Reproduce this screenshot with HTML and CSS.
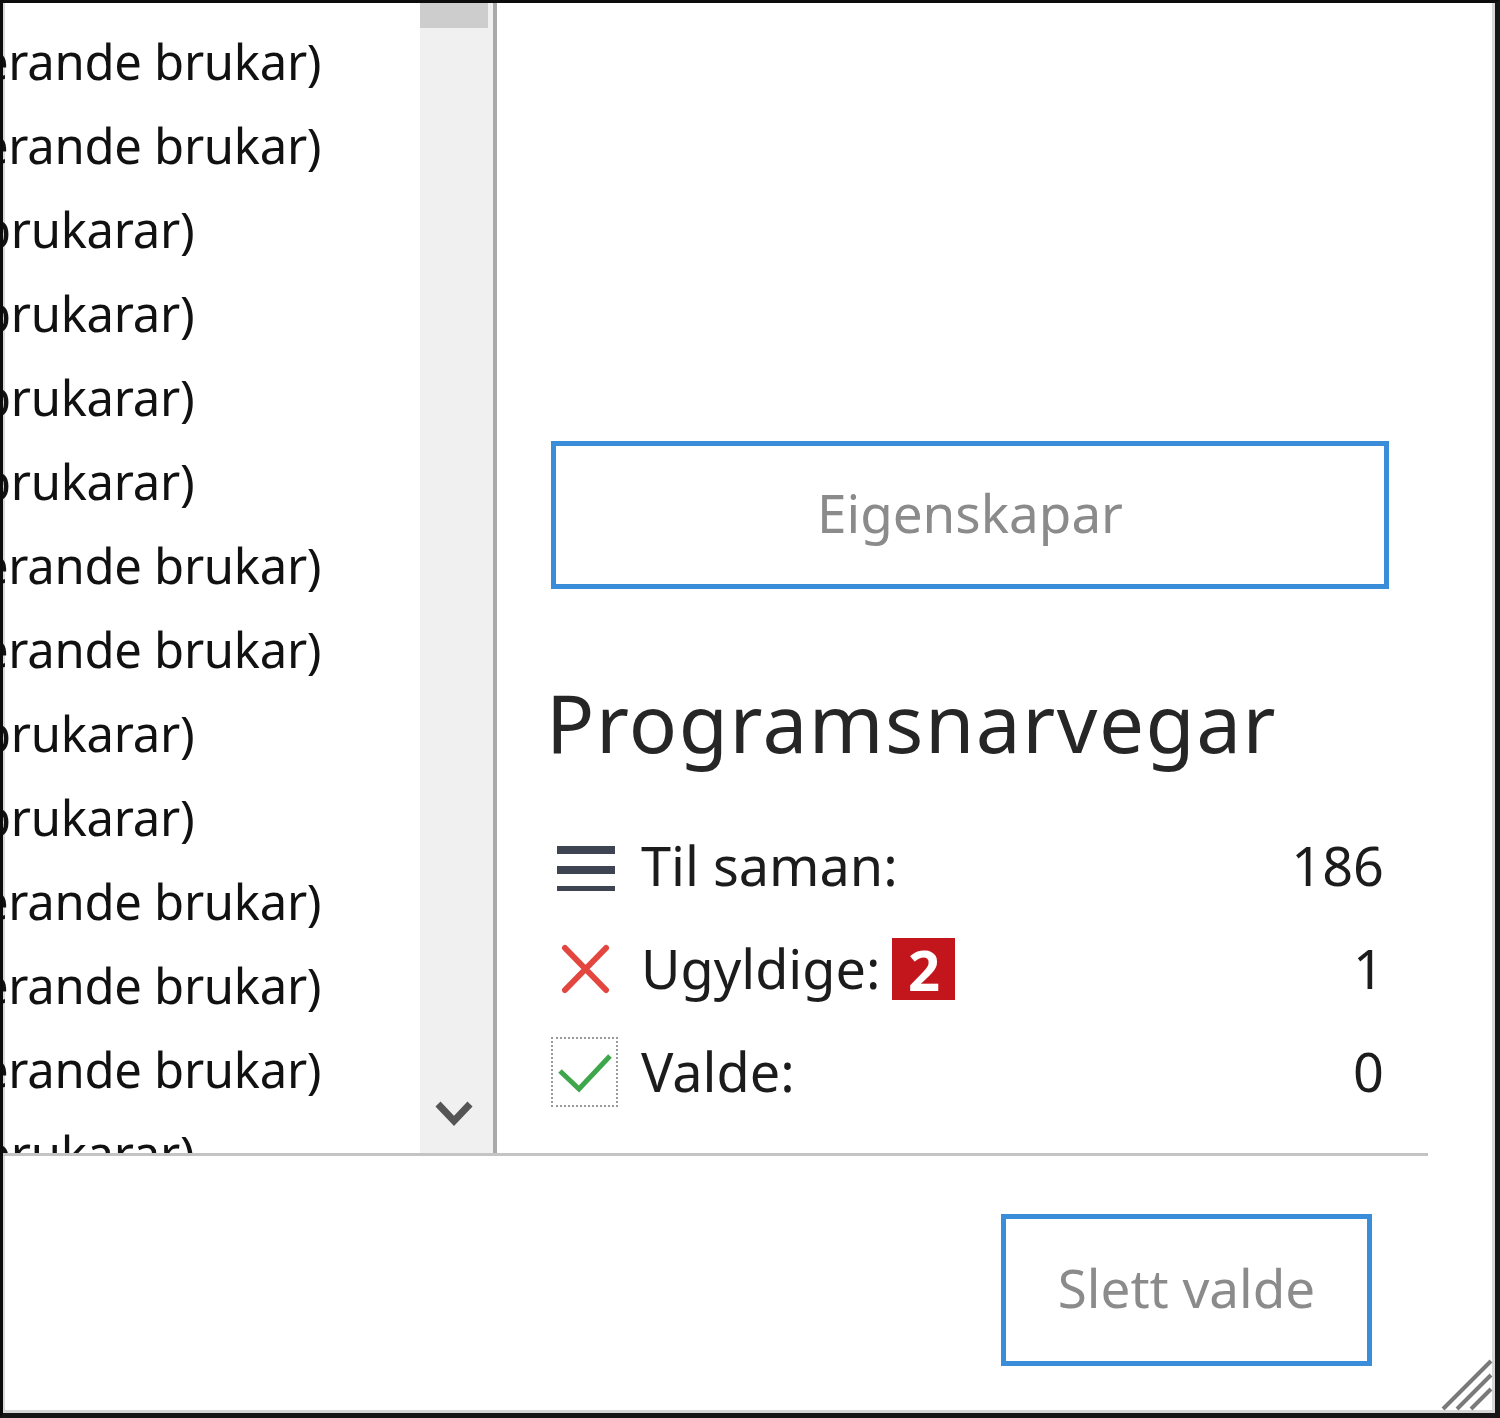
FILE: index.html
```html
<!DOCTYPE html>
<html lang="nn">
<head>
<meta charset="utf-8">
<title>Programsnarvegar</title>
<link rel="stylesheet" href="styles.css">
</head>
<body>
<div class="window">
  <div class="main">
    <div class="list">
      <div class="row">erande brukar)</div>
      <div class="row">erande brukar)</div>
      <div class="row">brukarar)</div>
      <div class="row">brukarar)</div>
      <div class="row">brukarar)</div>
      <div class="row">brukarar)</div>
      <div class="row">erande brukar)</div>
      <div class="row">erande brukar)</div>
      <div class="row">brukarar)</div>
      <div class="row">brukarar)</div>
      <div class="row">erande brukar)</div>
      <div class="row">erande brukar)</div>
      <div class="row">erande brukar)</div>
      <div class="row">brukarar)</div>
    </div>
    <div class="scrollbar">
      <div class="thumb"></div>
      <div class="arrow">
        <svg width="40" height="30" viewBox="0 0 40 30"><path d="M4 6 L20 23 L36 6" fill="none" stroke="#555" stroke-width="7"/></svg>
      </div>
    </div>
    <div class="panel">
      <div class="btn btn-props">Eigenskapar</div>
      <h2 class="heading">Programsnarvegar</h2>
      <div class="stats">
        <div class="stat">
          <span class="icon">
            <svg width="60" height="50" viewBox="0 0 60 50"><rect x="2" y="5" width="58" height="8" fill="#3e4452"/><rect x="2" y="25" width="58" height="8" fill="#3e4452"/><rect x="2" y="45" width="58" height="8" fill="#3e4452"/></svg>
          </span>
          <span class="label">Til saman:</span>
          <span class="value">186</span>
        </div>
        <div class="stat">
          <span class="icon">
            <svg width="50" height="50" viewBox="0 0 50 50"><path d="M5 4 L46 46 M46 4 L5 46" stroke="#e3463e" stroke-width="6" stroke-linecap="round"/></svg>
          </span>
          <span class="label">Ugyldige:</span>
          <span class="badge">2</span>
          <span class="value">1</span>
        </div>
        <div class="stat">
          <span class="icon icon-check">
            <svg width="62" height="66" viewBox="0 0 62 66"><path d="M6 32 L25 50 L56 17" fill="none" stroke="#3ea64b" stroke-width="5"/></svg>
          </span>
          <span class="label">Valde:</span>
          <span class="value">0</span>
        </div>
      </div>
    </div>
  </div>
  <div class="hline"></div>
  <div class="footer">
    <div class="btn btn-delete">Slett valde</div>
  </div>
  <svg class="grip" width="56" height="56" viewBox="0 0 56 56"><path d="M54 6 L6 54 M54 20 L20 54 M54 34 L34 54" stroke="#7a7a7a" stroke-width="4"/></svg>
</div>
</body>
</html>
```
FILE: styles.css
```css
html, body {
  margin: 0;
  padding: 0;
  background: #ffffff;
}

.window {
  position: relative;
  width: 1500px;
  height: 1418px;
  box-sizing: border-box;
  border-top: 3px solid #0c0c0c;
  border-left: 3px solid #0c0c0c;
  border-right: 5px solid #161616;
  border-bottom: 5px solid #161616;
  box-shadow: inset -3px -3px 0 #d6d6d6, inset 2px 0 0 #d9d9d9;
  background: #ffffff;
  display: flex;
  flex-direction: column;
  font-family: "Noto Sans", "Open Sans", sans-serif;
  overflow: hidden;
}

.main {
  height: 1150px;
  display: flex;
  flex-direction: row;
  flex: none;
}

.list {
  width: 417px;
  padding-top: 16px;
  box-sizing: border-box;
  overflow: hidden;
  flex: none;
}

.row {
  height: 84px;
  line-height: 84px;
  font-size: 49px;
  letter-spacing: -0.3px;
  color: #111111;
  white-space: nowrap;
  margin-left: -22px;
}

.scrollbar {
  width: 73px;
  flex: none;
  background: #f0f0f0;
  display: flex;
  flex-direction: column;
  justify-content: space-between;
}

.thumb {
  height: 25px;
  width: 68px;
  background: #cdcdcd;
}

.arrow {
  height: 80px;
  display: flex;
  align-items: center;
  justify-content: center;
  padding-right: 6px;
}

.panel {
  flex: 1;
  border-left: 4px solid #a9a9a9;
  padding: 438px 106px 0 54px;
  display: flex;
  flex-direction: column;
}

.btn {
  box-sizing: border-box;
  border: 5px solid #3a8dd8;
  color: #8b8b8b;
  font-size: 53px;
  display: flex;
  align-items: center;
  justify-content: center;
  background: #ffffff;
}

.btn-props {
  height: 148px;
  padding-bottom: 6px;
}

.heading {
  margin: 86px 0 0 -5px;
  font-size: 80px;
  letter-spacing: 1.5px;
  line-height: 94px;
  font-weight: 400;
  color: #262626;
}

.stats {
  margin-top: 45px;
  padding-right: 5px;
  display: flex;
  flex-direction: column;
}

.stat {
  height: 103px;
  display: flex;
  align-items: center;
  font-size: 54px;
  color: #1c1c1c;
}

.icon {
  width: 67px;
  height: 70px;
  margin-right: 23px;
  display: flex;
  align-items: center;
  justify-content: center;
  flex: none;
  box-sizing: border-box;
}

.icon svg {
  display: block;
}

.icon-check {
  border: 2px dotted #9a9a9a;
}

.label {
  line-height: 103px;
  white-space: nowrap;
}

.badge {
  margin-left: 12px;
  width: 63px;
  height: 62px;
  background: #c3161c;
  color: #ffffff;
  font-weight: 700;
  font-size: 56px;
  line-height: 62px;
  text-align: center;
}

.value {
  margin-left: auto;
  line-height: 103px;
}

.hline {
  width: 1425px;
  height: 3px;
  background: #c4c4c4;
  flex: none;
}

.footer {
  flex: 1;
  display: flex;
  justify-content: flex-end;
  align-items: flex-start;
  padding: 58px 123px 0 0;
}

.btn-delete {
  width: 371px;
  height: 152px;
  padding-bottom: 6px;
}

.grip {
  position: absolute;
  right: 2px;
  bottom: 2px;
}
```
